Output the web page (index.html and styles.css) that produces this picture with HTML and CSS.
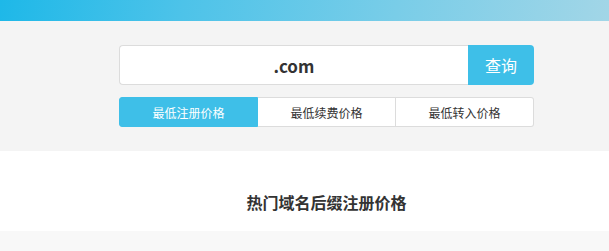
FILE: index.html
```html
<!DOCTYPE html>
<html lang="zh-CN">
<head>
<meta charset="utf-8">
<title>域名价格</title>
<link rel="stylesheet" href="styles.css">
</head>
<body>
<div class="topbar"></div>
<section class="search-area">
  <div class="inner">
    <div class="search">
      <div class="search-input">.com</div>
      <button class="search-btn">查询</button>
    </div>
    <div class="tabs">
      <div class="tab active">最低注册价格</div>
      <div class="tab">最低续费价格</div>
      <div class="tab">最低转入价格</div>
    </div>
  </div>
</section>
<section class="hot">
  <h2 class="hot-title">热门域名后缀注册价格</h2>
</section>
<div class="bottom"></div>
</body>
</html>
```

FILE: styles.css
```css
* { box-sizing: border-box; }
html, body { margin: 0; padding: 0; }
body {
  width: 609px;
  overflow: hidden;
  font-family: "Noto Sans CJK SC", "Noto Sans", sans-serif;
  color: #333;
  background: #f8f8f8;
}
.topbar {
  height: 21px;
  background: linear-gradient(100deg, #1eb8e8 0%, #4dc3e9 30%, #79cde8 65%, #a2d6e7 100%);
}
.search-area {
  background: #f4f4f4;
  height: 130px;
  padding: 24px 0 0 44px;
  display: flex;
  justify-content: center;
}
.inner { width: 415px; }
.search {
  display: flex;
  height: 40px;
}
.search-input {
  flex: 1;
  background: #fff;
  border: 1px solid #dcdcdc;
  border-right: none;
  border-radius: 4px 0 0 4px;
  display: flex;
  align-items: center;
  justify-content: center;
  font-size: 17px;
  font-weight: bold;
  color: #333;
}
.search-btn {
  width: 66px;
  border: none;
  background: #3ebfe8;
  color: #fff;
  font-family: inherit;
  font-size: 16px;
  border-radius: 0 4px 4px 0;
  padding: 0;
}
.tabs {
  display: flex;
  margin-top: 12px;
  height: 30px;
}
.tab {
  flex: 1;
  display: flex;
  align-items: center;
  justify-content: center;
  font-size: 12px;
  color: #333;
  background: #fff;
  border: 1px solid #dcdcdc;
  border-left: none;
}
.tab:first-child { border-radius: 3px 0 0 3px; border-left: 1px solid #dcdcdc; }
.tab:last-child { border-radius: 0 3px 3px 0; }
.tab.active {
  background: #3ebfe8;
  border-color: #3ebfe8;
  color: #fff;
}
.hot {
  background: #fff;
  height: 80px;
  display: flex;
  align-items: center;
  justify-content: center;
  padding: 22px 0 0 44px;
}
.hot-title {
  margin: 0;
  font-size: 16px;
  font-weight: bold;
  color: #333;
}
.bottom { height: 20px; background: #f8f8f8; }
```
